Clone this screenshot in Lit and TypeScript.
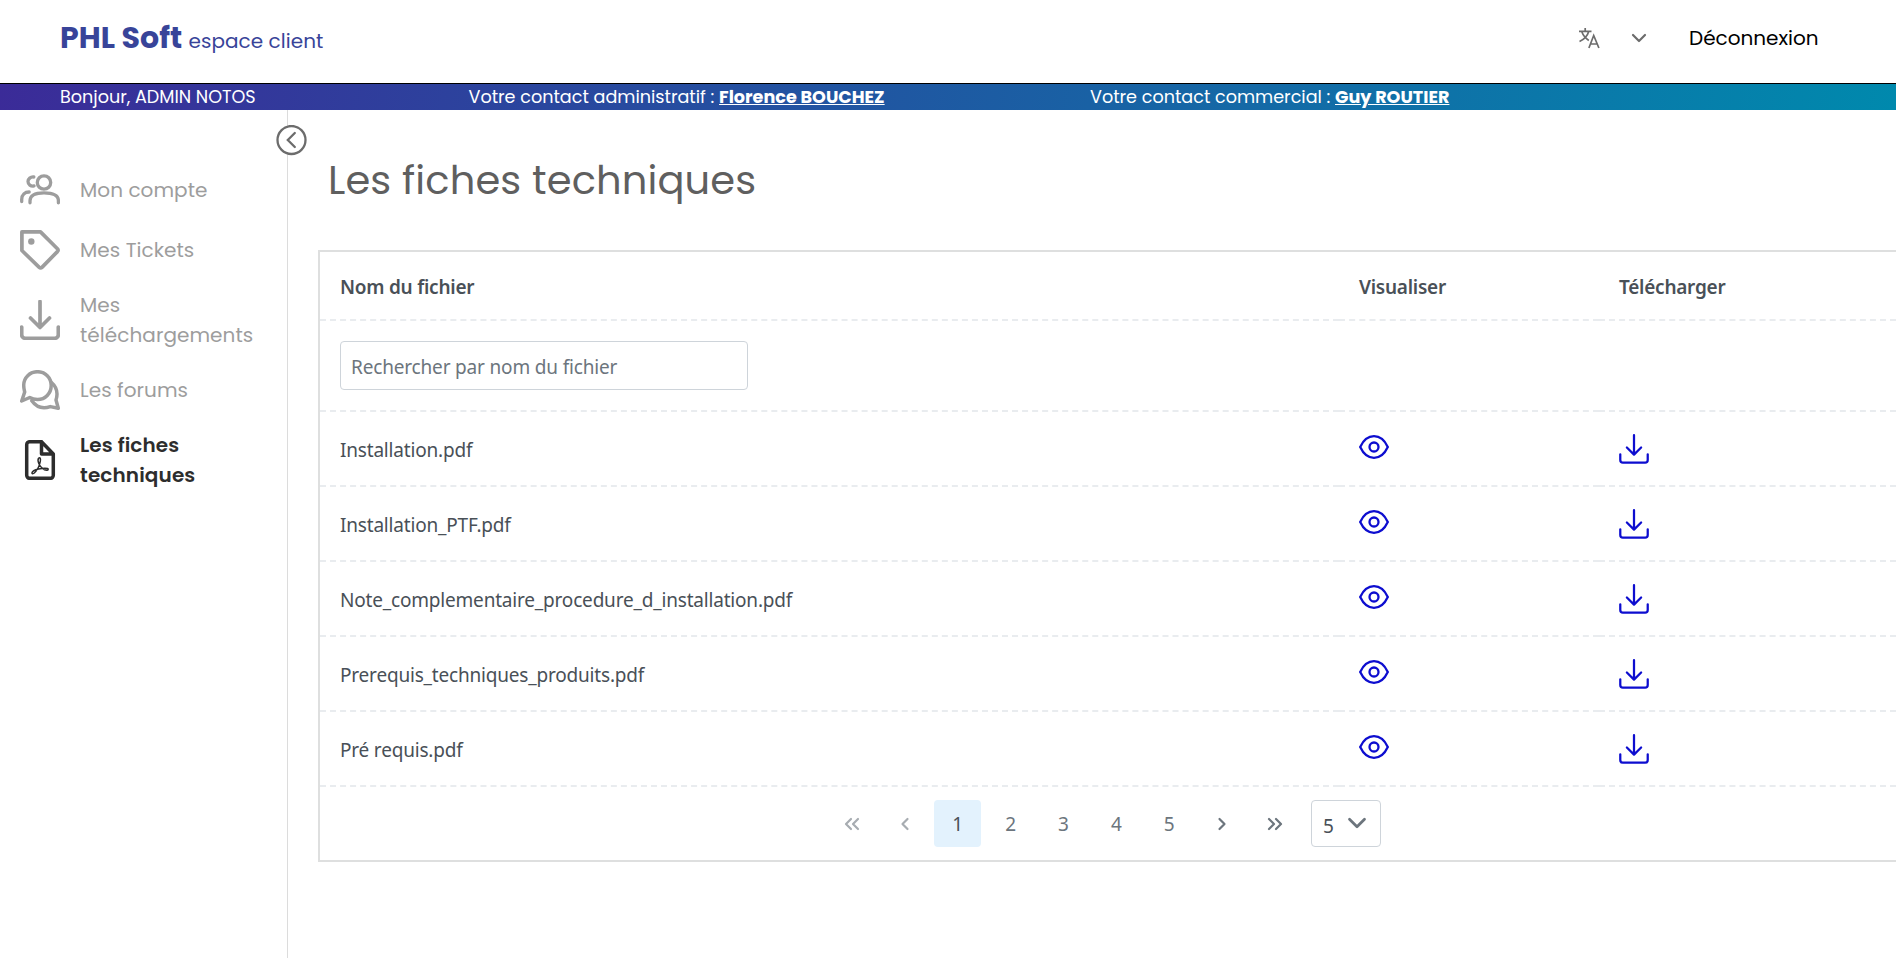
import { LitElement, html, css } from "lit";
import { customElement } from "lit/decorators.js";

const files = [
  "Installation.pdf",
  "Installation_PTF.pdf",
  "Note_complementaire_procedure_d_installation.pdf",
  "Prerequis_techniques_produits.pdf",
  "Pré requis.pdf",
];

const download = (cls: string, sw: number) => html`<svg class=${cls} viewBox="0 0 40 40" fill="none" stroke="currentColor" stroke-width=${sw} stroke-linecap="round" stroke-linejoin="round"><path d="M20 1.500V27M10.500 18l9.500 9.500L29.500 18M1.700 27v7.800c0 2 1.500 3.500 3.500 3.500h29.600c2 0 3.500-1.500 3.500-3.500v-7.800"/></svg>`;

const eye = html`<svg class="eye" viewBox="0 0 30 24" fill="none" stroke="currentColor" stroke-width="2.300"><path d="M1.200 12C4 6 9 1.200 15 1.200S26 6 28.800 12C26 18 21 22.800 15 22.800S4 18 1.200 12z"/><circle cx="15" cy="12" r="4.500"/></svg>`;

const users = html`<svg class="ico" viewBox="0 0 40 40" fill="none" stroke="currentColor" stroke-width="3.300" stroke-linecap="round"><circle cx="24" cy="12.500" r="6.700"/><path d="M13.800 7c-3.200-.4-5.800 1.800-5.800 4.600s2.800 5 6 4.300M1.700 31.500v-2c0-5 3.200-7.500 7.500-7.500M10 32.800v-2c0-4.500 3.500-8 14-8s14.400 3.500 14.400 8v2"/></svg>`;

const tag = html`<svg class="ico" viewBox="0 0 40 40" fill="none" stroke="currentColor" stroke-width="3.700" stroke-linejoin="round"><path d="M1.900 1.900H20.500L37.400 18.800Q38.700 20.200 37.400 21.600L22.200 37.100Q20.600 38.600 19 37.100L1.900 20.500z"/><circle cx="11.300" cy="11.500" r="3.200" fill="currentColor" stroke="none"/></svg>`;

const forums = html`<svg class="ico" viewBox="0 0 40 40" fill="none" stroke="currentColor" stroke-width="3.500" stroke-linejoin="round" stroke-linecap="round"><path d="M17.500 1.700C9.800 1.700 3.700 7.700 3.700 15.200c0 3 .5 4.700 1 6.800L1.700 31l8-3.500c2.500 1.500 5 2 7.800 2 7.800 0 13.700-6.200 13.700-14S25.300 1.700 17.500 1.700z"/><path d="M31.500 12.500c3.500 3 5.500 7.500 5.500 11.500 0 2-.3 4-1 6l2.300 8.300-8-1.700c-6.500 2.300-13.500 1.200-18.500-5.800"/></svg>`;

const pdf = html`<svg class="ico" viewBox="0 0 40 40" fill="none" stroke="currentColor" stroke-width="3.500" stroke-linejoin="round" stroke-linecap="round"><path d="M21.500 1.700H9.700a3 3 0 0 0-3 3v30.600a3 3 0 0 0 3 3h20.600a3 3 0 0 0 3-3V14L21.500 1.700zV14H33.300"/><path stroke-width="1.500" d="M18.600 18.300c1.300-1.200 2.300 0 1.700 3-.8 4.200-3.200 9-6 11.700-1.200 1-2.600.8-2.300-.3.400-1.500 3.700-2.900 6.500-3.600 3.200-.8 7.300-1.200 9-.6 1.200.5.700 1.900-.8 1.800-3-.2-6.600-3.600-7.800-6.500-.8-2-1-4.700-.3-5.500z"/></svg>`;

const chev = (cls: string, d: string) => html`<svg class=${cls} viewBox="0 0 16 16" fill="none" stroke="currentColor" stroke-width="2.200" stroke-linecap="round" stroke-linejoin="round"><path d=${d}/></svg>`;

@customElement("app-root")
export class AppRoot extends LitElement {
  static styles = css`
    :host { display: flex; flex-direction: column; height: 958px; overflow: hidden; background: #fff;
      font-family: Poppins, Inter, sans-serif; box-sizing: border-box; }
    * { box-sizing: border-box; }
    svg { display: block; flex: none; }
    header { height: 83px; flex: none; display: flex; align-items: center; padding: 0 77px 7px 60px; }
    .brand { display: flex; align-items: baseline; color: #384499; white-space: pre; }
    .brand b { font-size: 30px; font-weight: 700; letter-spacing: 0.050px; width: 128.500px; }
    .brand span { font-size: 20px; letter-spacing: 0.050px; }
    .tools { margin-left: auto; display: flex; align-items: center; color: #6c6c6c; }
    .lang { width: 22px; height: 22px; }
    .dd { width: 16px; height: 16px; margin-left: 31px; }
    .logout { color: #000; font-size: 20px; width: 130px; margin-left: 42px; white-space: nowrap; }
    .bar { height: 27px; flex: none; border-top: 1px solid #000; color: #fff; font-size: 17.600px; line-height: 26px;
      background: linear-gradient(100deg, #3b2b98, #0089ad); display: grid; grid-template-columns: 408.500px 621.500px 1fr; padding-left: 60px; white-space: nowrap; }
    .bar u { font-weight: 700; }
    .body { flex: 1; display: flex; min-height: 0; }
    nav { width: 288px; flex: none; border-right: 1px solid #dcdcdc; padding: 50px 0 0 20px; position: relative; color: #9d9d9d; font-size: 20px; line-height: 30px; letter-spacing: 0.060px; }
    .collapse { position: absolute; left: 276px; top: 15px; width: 31px; height: 31px; color: #6c6c6c; }
    .item { display: flex; align-items: center; gap: 20px; min-height: 60px; padding: 10px 0; white-space: pre; }
    .active { color: #2d2d2d; font-weight: 600; letter-spacing: 0.120px; }
    .ico { width: 40px; height: 40px; }
    main { flex: 1; min-width: 0; padding-left: 30px; }
    h1 { margin: 0; height: 140px; padding: 39px 0 0 10px; font-size: 40px; line-height: 63px; font-weight: 400; letter-spacing: 0.110px; color: #5f5f5f; white-space: nowrap; }
    .panel { border: 2px solid #dedfdf; border-right: 0; font-family: "Segoe UI", "Noto Sans", sans-serif; letter-spacing: -0.170px; color: #495057; font-size: 19px; height: 612px; }
    .row { display: grid; grid-template-columns: 1019px 260px 1fr; height: 75px; }
    .row > div { border-bottom: 2px dashed #e9ecef; display: flex; align-items: center; padding: 0 20px; }
    .row.head { height: 69px; font-weight: 600; letter-spacing: -0.250px; }
    .row.head > div { padding-top: 2px; }
    .row.filter { height: 91px; }
    .search { width: 408px; height: 49px; border: 1px solid #ced4da; border-radius: 4px; color: #6c757d; display: flex; align-items: center; padding: 2px 10px 0; white-space: nowrap; }
    .row > .name { white-space: nowrap; padding-top: 2px; letter-spacing: -0.190px; }
    .eye { width: 30px; height: 24px; margin-top: -3px; color: #0d0dcf; }
    .dl { width: 30px; height: 30px; margin-top: 1px; color: #0d0dcf; }
    .pager { display: flex; height: 73px; align-items: center; padding-left: 505.500px; }
    .pg { width: 47px; height: 47px; margin: 0 2.950px; border-radius: 4px; display: flex; align-items: center; justify-content: center; color: #6c757d; flex: none; }
    .on { background: #e3f2fd; color: #495057; }
    .off { color: #a7acb1; }
    .c { width: 16px; height: 16px; }
    .sel { width: 70px; height: 47px; margin-left: 9.500px; border: 1px solid #ced4da; border-radius: 4px; display: flex; align-items: center; padding: 4px 13px 0 11px; justify-content: space-between; }
    .cs { width: 20px; height: 20px; margin-top: -6px; color: #6c757d; }
  `;

  render() {
    const nav = (icon: unknown, t: string, active = false) =>
      html`<div class="item ${active ? "active" : ""}">${icon}<span>${t}</span></div>`;
    return html`
      <header>
        <div class="brand"><b>PHL Soft</b><span>espace client</span></div>
        <div class="tools">
          <svg class="lang" viewBox="0 0 22 22" fill="none" stroke="currentColor" stroke-width="1.700"><path d="M1 4.300h12.500M7.200 1v3.300M10.800 4.300C9.500 9 6 12.500 1.500 14.500M3.800 4.800c1.500 4 4 6.700 7 8.700M10.900 21l4.800-12.500L20.900 21M12.500 17h7"/></svg>
          ${chev("dd", "M2 5l6 6 6-6")}
          <span class="logout">Déconnexion</span>
        </div>
      </header>
      <div class="bar">
        <span>Bonjour, ADMIN NOTOS</span>
        <span>Votre contact administratif : <u>Florence BOUCHEZ</u></span>
        <span>Votre contact commercial : <u>Guy ROUTIER</u></span>
      </div>
      <div class="body">
        <nav>
          <svg class="collapse" viewBox="0 0 31 31" fill="none" stroke="currentColor" stroke-width="2.300"><circle cx="15.500" cy="15" r="14" fill="#fff"/><path stroke-linecap="round" d="M18.800 8l-7 7 7 7"/></svg>
          ${nav(users, "Mon compte")}
          ${nav(tag, "Mes Tickets")}
          ${nav(download("ico", 3.7), "Mes\ntéléchargements")}
          ${nav(forums, "Les forums")}
          ${nav(pdf, "Les fiches\ntechniques", true)}
        </nav>
        <main>
          <h1>Les fiches techniques</h1>
          <section class="panel">
            <div class="row head"><div>Nom du fichier</div><div>Visualiser</div><div>Télécharger</div></div>
            <div class="row filter"><div><div class="search">Rechercher par nom du fichier</div></div><div></div><div></div></div>
            ${files.map((f) => html`<div class="row"><div class="name">${f}</div><div>${eye}</div><div>${download("dl", 3)}</div></div>`)}
            <div class="pager">
              <span class="pg off">${chev("c", "M7 3L2 8l5 5M14 3L9 8l5 5")}</span>
              <span class="pg off">${chev("c", "M10.500 3L5.500 8l5 5")}</span>
              <span class="pg on">1</span><span class="pg">2</span><span class="pg">3</span><span class="pg">4</span><span class="pg">5</span>
              <span class="pg">${chev("c", "M5.500 3L10.500 8l-5 5")}</span>
              <span class="pg">${chev("c", "M2 3L7 8l-5 5M9 3L14 8l-5 5")}</span>
              <div class="sel"><span>5</span>${chev("cs", "M2 5l6 6L14 5")}</div>
            </div>
          </section>
        </main>
      </div>`;
  }
}
